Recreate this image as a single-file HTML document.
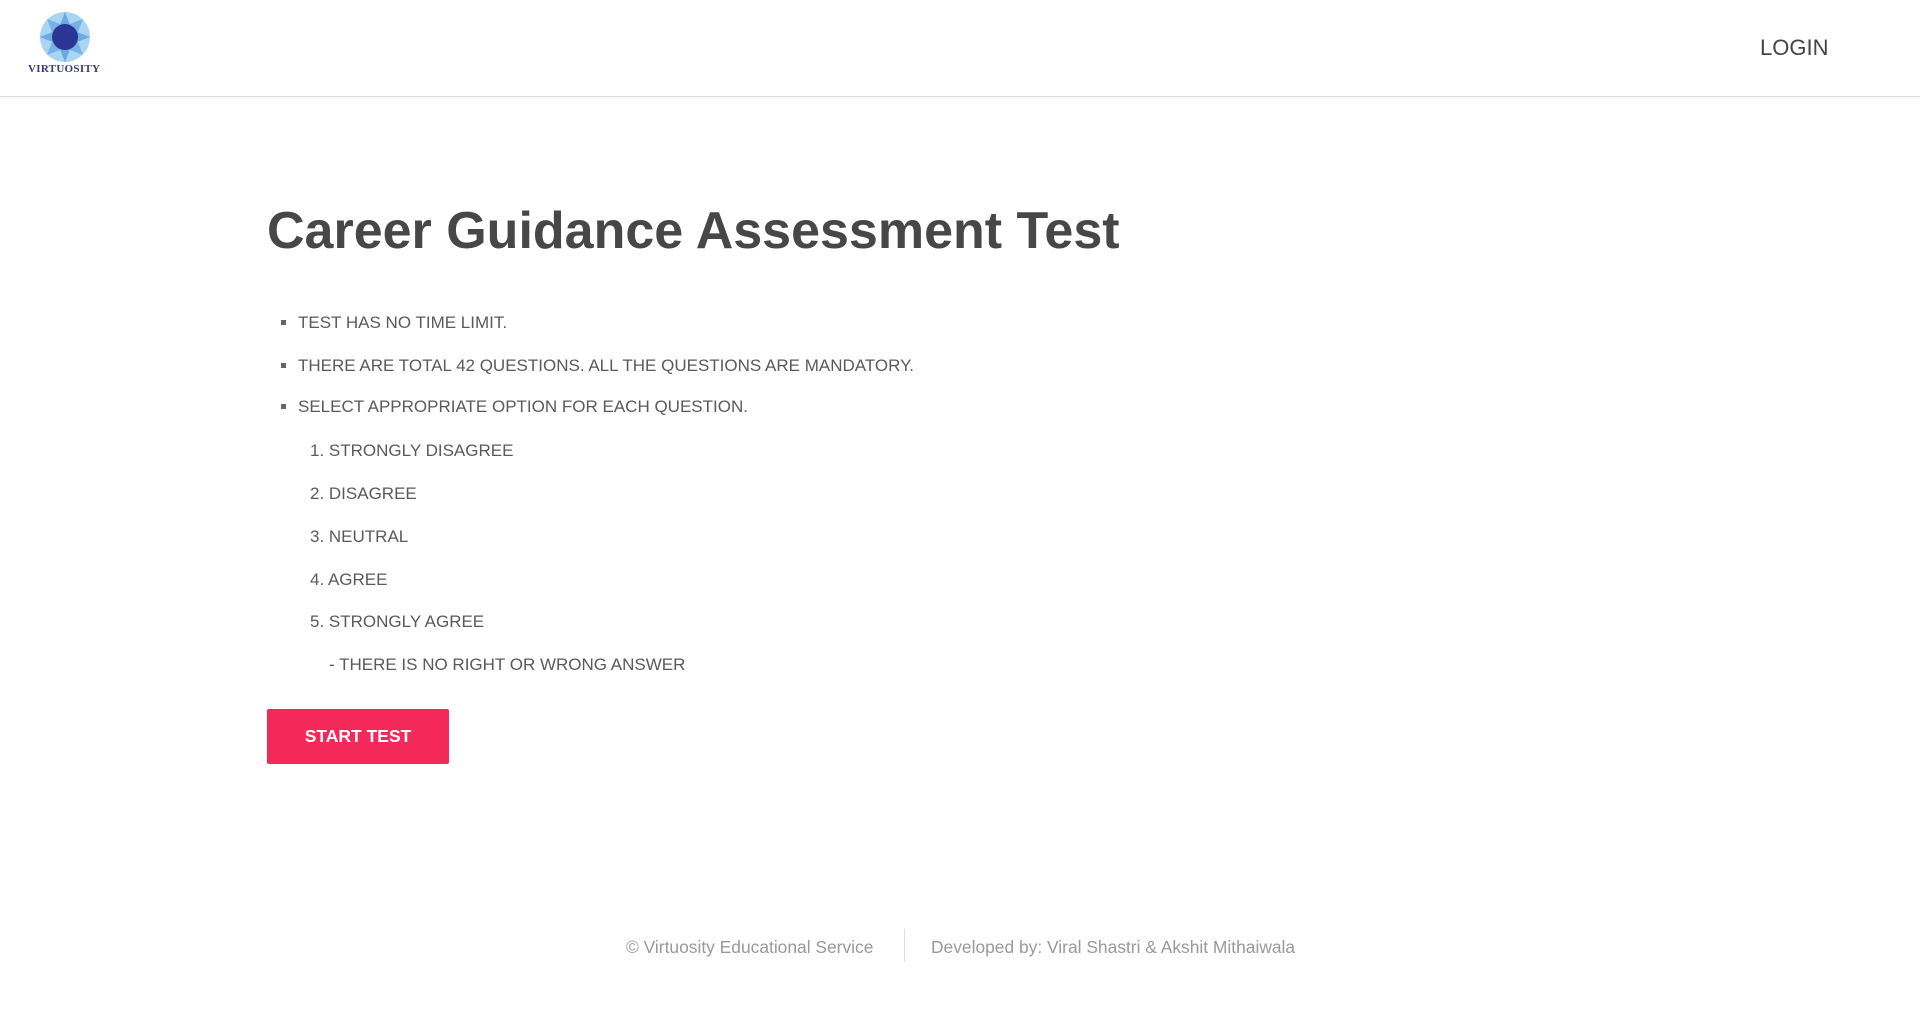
<!DOCTYPE html>
<html><head><meta charset="utf-8"><style>
body{margin:0;width:1920px;height:1032px;background:#fff;font-family:"Liberation Sans",Arial,sans-serif;color:#555;position:relative;overflow:hidden}
.hdr{position:absolute;left:0;top:0;width:1920px;height:96px;border-bottom:1px solid #ddd;box-shadow:0 1px 2px rgba(0,0,0,.06)}
.login{position:absolute;left:1760px;top:35px;font-size:22px;color:#444}
.logo-t{position:absolute;left:28px;top:63px;font-family:"Liberation Serif",serif;font-size:11px;font-weight:bold;color:#3a3a78;letter-spacing:0.3px}
h1{position:absolute;left:267px;top:201px;margin:0;font-size:52px;font-weight:bold;color:#474747;white-space:nowrap}
.l{position:absolute;font-size:17px;color:#5a5a5a;white-space:nowrap}
.b{position:absolute;width:5px;height:5px;background:#666}
.btn{position:absolute;left:267px;top:709px;width:182px;height:55px;background:#f5285a;border-radius:2px;color:#fff;font-weight:bold;font-size:17.5px;text-align:center;line-height:55px}
.f{position:absolute;top:937px;font-size:17.4px;color:#999;white-space:nowrap}
.div{position:absolute;left:904px;top:929px;width:1px;height:33px;background:#ddd}
</style></head><body>
<div class="hdr">
<svg style="position:absolute;left:36px;top:10px" width="58" height="54" viewBox="0 0 58 54">
<circle cx="29" cy="27" r="25" fill="#a9d4f2"/>
<g fill="#5fa3df" opacity=".85">
<polygon points="29,2 36,20 54,27 36,34 29,52 22,34 4,27 22,20"/>
<polygon points="11,9 29,16 47,9 40,27 47,45 29,38 11,45 18,27" opacity=".8"/>
</g>
<circle cx="29" cy="27" r="13" fill="#2c3593"/>
</svg>
<div class="logo-t">VIRTUOSITY</div>
<div class="login">LOGIN</div>
</div>
<h1>Career Guidance Assessment Test</h1>
<div class="b" style="left:281px;top:320px"></div><div class="l" style="left:298px;top:313px">TEST HAS NO TIME LIMIT.</div>
<div class="b" style="left:281px;top:363px"></div><div class="l" style="left:298px;top:356px">THERE ARE TOTAL 42 QUESTIONS. ALL THE QUESTIONS ARE MANDATORY.</div>
<div class="b" style="left:281px;top:404px"></div><div class="l" style="left:298px;top:397px">SELECT APPROPRIATE OPTION FOR EACH QUESTION.</div>
<div class="l" style="left:310px;top:441px">1. STRONGLY DISAGREE</div>
<div class="l" style="left:310px;top:484px">2. DISAGREE</div>
<div class="l" style="left:310px;top:527px">3. NEUTRAL</div>
<div class="l" style="left:310px;top:570px">4. AGREE</div>
<div class="l" style="left:310px;top:612px">5. STRONGLY AGREE</div>
<div class="l" style="left:329px;top:655px">- THERE IS NO RIGHT OR WRONG ANSWER</div>
<div class="btn">START TEST</div>
<div class="f" style="left:626px">© Virtuosity Educational Service</div>
<div class="div"></div>
<div class="f" style="left:931px">Developed by: Viral Shastri &amp; Akshit Mithaiwala</div>
</body></html>
